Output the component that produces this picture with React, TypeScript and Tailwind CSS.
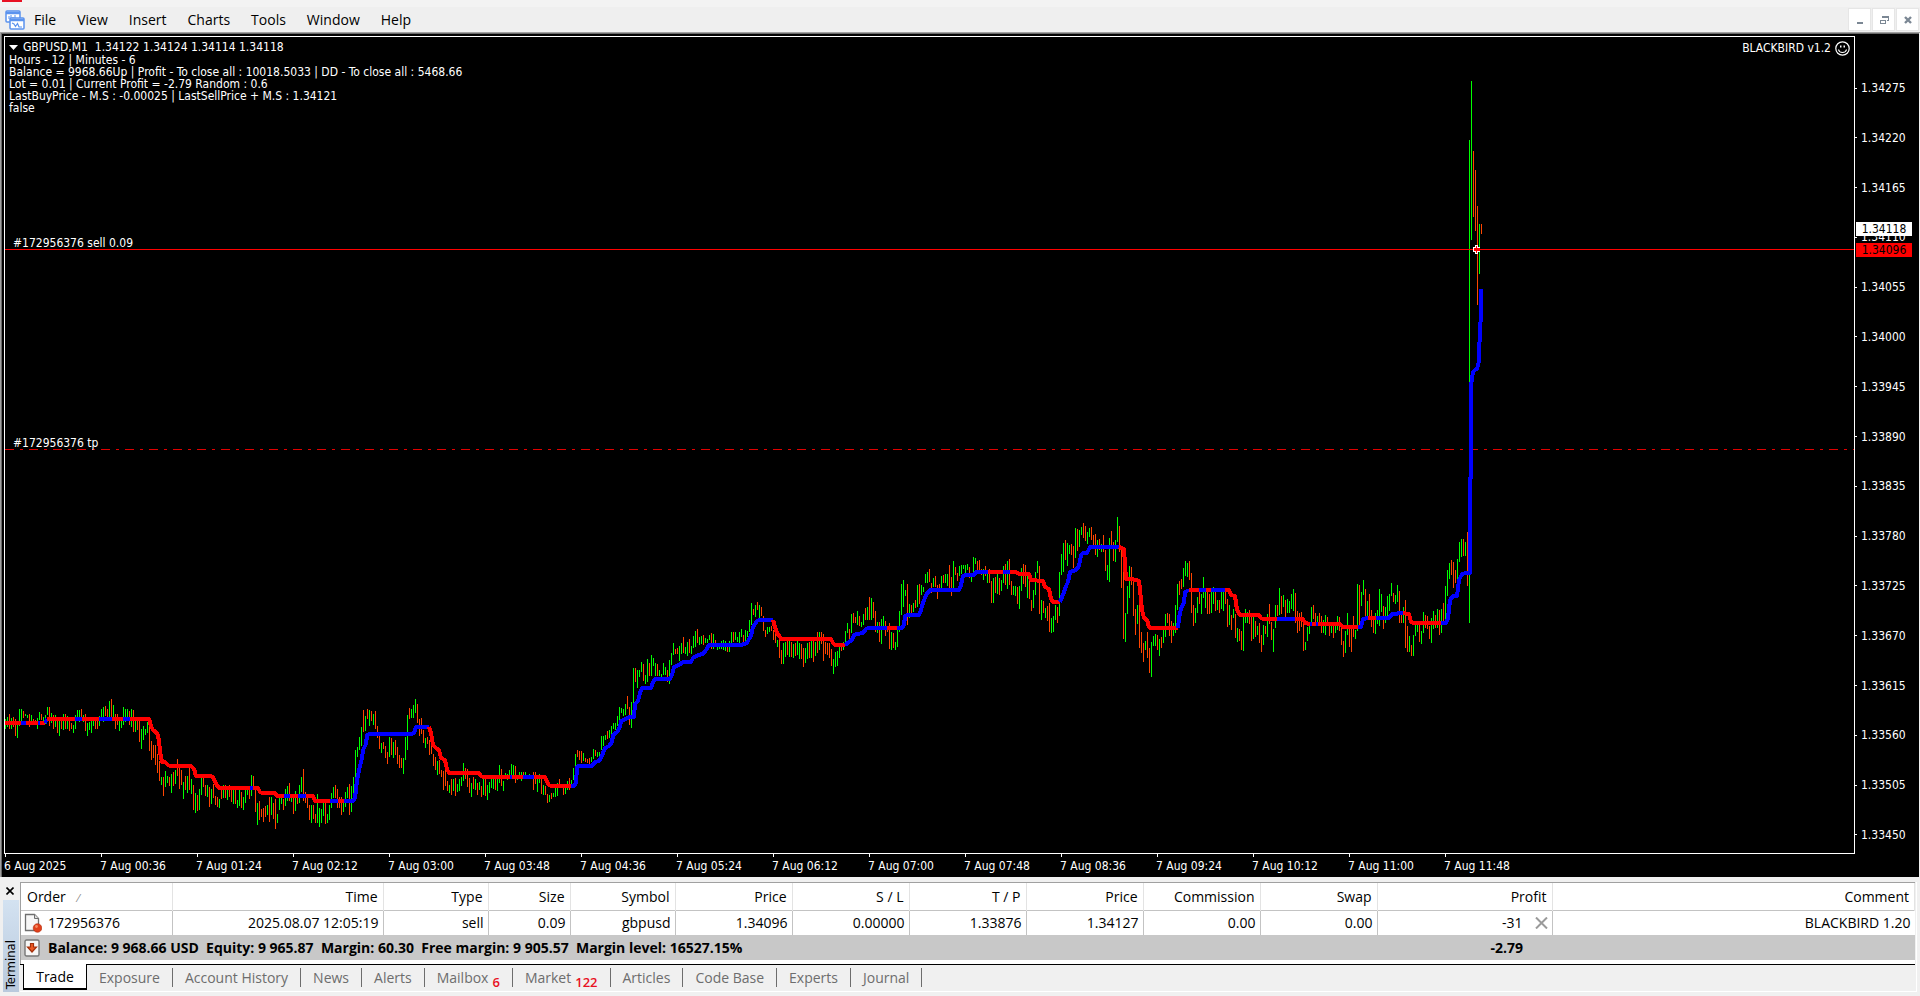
import React from "react";

/* Price bars, two pixels apart. Each entry is a direction (g = up, r = down)
   and the high and low, in thirds of a pixel below the run's origin. */
const RUNS: { x: number; y: number; bars: string }[] = [
  {
    x: 5,
    y: 690,
    bars:
      "g87-117 g81-111 r72-117 g84-117 r81-111 r87-138 g100-144 g57-108 g57-96 r63-84 g72-78 g75-84 r72-111 g75-105 r87-102 r90-105 g84-117 g66-90 r72-90 g81-102 g75-102 g51-75 r51-108 g69-99 r75-117 g75-111 r87-129 g87-138 r87-117 g72-120 r72-117 g78-117 r87-123 r99-117 g105-129 g75-117 g60-93 g60-96 r57-90 g75-96 r72-123 g99-138 g96-120 g93-129 g90-108 r84-117 r84-117 g78-108 g57-84 g51-96 r48-78 r57-84 g33-84 r27-84 g45-90 r72-117 r72-105 g84-123 g84-114 g51-105 g57-96 g57-90 r63-105 g57-111 r60-126 g90-126 r87-120 r90-156 g117-177 g108-150 g117-135 g96-129 r93-183 r153-210 r165-204 r165-225 r192-249 r213-273 g261-285 r261-318 g243-291 g258-279 r261-288 g252-309 r246-288 g240-282 r207-258 r234-297 r240-285 g276-327 r258-300 g258-309 r231-300 g267-312 r285-360 g309-369 r315-363 g297-360 g264-315 r261-291 r285-318 g285-321 r291-351 g297-342 r282-324 r318-345 r321-351 g327-354 r291-327 g285-324 r285-324 g291-330 r285-321 r291-336 g300-342 r291-342 g330-354 g297-348 r306-354 g321-360 g300-339 g294-315 r291-327 g255-318 r258-297 r297-366 g339-405 r333-390 r357-381 r354-396 r348-381 g345-375 r321-396 g321-375 r339-387 r327-417 g372-399 g324-360 g321-342 r327-360 g297-348 g288-333 r279-333 g318-336 r318-372 g303-363 r318-342 g285-339",
  },
  {
    x: 301,
    y: 690,
    bars:
      "g261-306 r237-333 r306-339 r318-354 r345-390 g345-398 r345-387 r372-400 g312-398 g354-410 g357-400 g339-378 r339-403 g372-398 g345-390 g309-354 g291-324 r285-324 r297-354 r321-354 r321-375 g333-366 g306-351 g291-324 r282-375 g288-366 g261-315 g180-261 g171-201 g141-180 g111-168 r60-126 g78-123 r57-87 g60-108 r63-93 g72-105 r63-117 r108-144 r135-177 g159-189 r156-177 r168-204 r186-222 g141-201 r144-195 g156-204 r150-195 r171-222 r195-234 r204-234 g204-252 g141-210 g75-180 r54-87 g57-84 g45-84 g27-69 r42-99 r87-138 r84-132 r120-159 g144-174 r141-162 r150-195 r165-192 r192-228 r201-240 g213-255 r210-252 r240-261 r243-300 r237-288 r273-303 g285-309 r267-315 g267-303 r264-318 g282-306 g267-303 g261-288 g219-273 r234-267 r237-291 r264-309 g279-321 r261-297 g267-300 r279-315 g276-300 r288-321 g261-315 r264-318 g285-330 g276-309 g264-294 g261-297 r264-300 g261-303 g225-279 r237-288 g273-303 g249-264 g252-270 g240-261 g222-255 g225-255 r228-279 g258-270 g246-261 g246-273 r246-258 g246-261 r255-261 g252-264 r255-264 r246-300 r246-282 g258-306 g252-279 r264-312 g285-315 r288-315 r312-339 g315-336 r309-327 g309-321 g291-321 g279-318 r267-291 g285-291 r282-315 g291-312 g273-300 r264-300 g270-282 g234-270 g192-258 r180-201 r183-210 r183-219 g189-213 r204-216 r207-219 r204-222",
  },
  {
    x: 591,
    y: 580,
    bars:
      "g531-546 g507-537 r510-528 g516-531 g516-531 g468-510 g468-498 g465-480 r453-477 g450-474 g438-462 g429-447 g429-450 g408-438 g381-420 g384-399 g387-408 g372-405 r348-387 r381-435 g366-444 g264-369 r264-306 g270-324 g270-291 g246-276 r252-303 g285-312 g237-306 r249-288 g225-288 g234-258 g249-288 r252-288 g270-288 g282-291 g249-285 g261-285 r270-306 g240-312 g219-255 g189-225 r207-222 r204-222 g198-243 g189-222 r171-219 g201-222 g186-228 r177-219 g198-222 g168-204 g153-201 r147-189 g171-195 g168-192 r165-195 g174-189 g177-189 g165-180 r159-207 g162-207 r180-195 g195-210 g192-207 g183-207 g180-210 g183-213 r198-216 g183-216 g156-189 r156-186 g156-180 g171-186 g156-189 g147-171 r165-186 g150-186 g153-171 g120-156 g69-135 r87-105 g75-111 r66-90 g75-114 r81-108 r108-153 r150-171 g141-162 g141-156 r138-153 r150-180 r159-189 g180-201 r180-234 r210-252 g189-252 g186-231 r177-225 g183-231 r186-231 g192-234 r189-228 g183-225 g189-237 r192-237 r204-261 g204-249 g189-237 r186-234 g183-234 r180-246 g186-228 r156-219 g156-210 r156-192 r162-243 r186-222 r189-225 r189-234 r207-258 g237-282 g216-261 g213-258 g201-234 r195-213 g186-210 g153-189 g129-159 r147-189 g102-159 r99-129 r111-129 g93-135 r108-138 g126-141 g102-135 r84-120 g81-120 r51-120 g54-120 r66-114 r93-156 g126-159 r126-186 g117-192 g108-141 r123-168 r141-156 r129-207 g156-210 r159-204 g186-210 g150-201",
  },
  {
    x: 899,
    y: 540,
    bars:
      "g213-276 g132-225 g120-201 g150-168 r132-255 g192-234 r195-219 g189-216 r180-204 g135-201 r132-192 g135-165 g141-156 g102-129 g96-129 r87-126 r129-159 g114-141 r108-141 r135-177 r132-144 g108-147 r105-129 g102-129 g102-138 r75-144 r111-168 g63-144 r81-105 r99-123 g78-108 g75-102 g75-87 g75-99 g72-90 r81-114 g102-126 g51-102 g54-72 r63-99 r60-90 r87-105 g87-120 r78-108 g93-129 r87-129 r123-189 g114-189 r111-159 g102-162 r114-165 g120-153 g78-129 r72-135 g63-147 r57-135 r123-165 g138-165 g138-168 r141-192 g138-207 g84-153 r72-132 r75-141 g102-174 r117-177 r180-213 g150-204 g96-165 g63-99 r78-222 g180-240 r183-219 g204-234 r198-243 r189-276 g234-279 g228-276 g195-240 r201-249 g96-228",
  },
  {
    x: 1061,
    y: 500,
    bars:
      "g162-225 g129-216 r120-180 g129-198 g135-162 r132-165 r138-204 g84-174 r87-153 g90-141 g81-105 r69-114 r78-123 g96-132 g84-111 r81-120 r105-141 r102-165 g120-171 r117-150 g132-156 r105-156 r150-213 g195-240 g114-246 r93-141 r126-183 g120-186 g51-126 r78-156 r144-264 r168-417 g339-426 g258-342 g198-294 r201-255 r246-348 r327-405 g315-372 r270-444 r396-459 r429-486 g423-450 r396-474 r444-519 g426-531 g408-438 g402-438 r405-450 g417-468 r411-444 g384-429 g342-411 r339-369 r342-408 r363-429 g369-408 g315-399 g252-330 r243-285 r237-267 g204-261 g183-228 g189-231 r183-240 r219-339 r315-378 g324-369 g291-339 r273-312 g282-342 g231-294 g270-324 r270-342 r282-342 g270-339 g261-312 r267-333 g300-330 r300-339 g270-327 g270-333 r273-312 r297-381 g315-375 r345-390 g327-354 r342-414 g384-426 r387-423 r393-450 g345-453 g327-369 g336-369 r330-372 r348-423 g345-417 r363-411 g378-405 r369-429 r405-456 g375-435 r378-402 g342-411 r312-372 r366-420 g387-456 g315-384 r315-348 g264-345 r288-342 g285-321 r300-351 g297-339 g303-339 g282-327 g267-333 r279-369 r333-399 r339-393 r336-381 r369-453 g426-450 g381-423 g375-402 g321-372 r315-357 r339-372 g348-372 r339-372 r348-399 g360-399 g345-405 r351-372 r372-408 g372-399 r375-414 g372-399 g348-390 r351-393 r375-435 r423-471 g393-459 g339-405 r381-441 r381-456 r348-411 g390-417 g252-393 r255-378 g276-318 g240-285 r267-348 g303-348 r282-354 r330-381 r354-399 g339-402 g330-372 g267-378 g282-336 r318-387 g321-369 g288-351 g282-333 g249-288 r279-306 g285-312 g255-306 r273-369 r342-369 g321-369 r300-444 r378-456 g408-456 r435-468 g405-468 g375-408 g369-396 r369-426 g393-432 g336-399 r345-384 r348-387 r378-417 g354-429 g333-387 r345-384 g327-384 r330-405 g327-399 r309-363 g258-360 g210-288 g189-237 r180-225 r186-264 r210-249 g177-240 g126-186 g117-171 r117-168 g126-168 r96-258",
  },
  {
    x: 1469,
    y: 0,
    bars: "g420-1869 g243-720 r453-651 r510-693 r618-915 g672-822 r672-702",
  },
];

/* Trend line: a colour letter, then the points of that stretch. */
const TREND = [
  "r 5,723 21,723",
  "b 21,723 26,723",
  "r 26,723 38,723",
  "b 38,723 40,723",
  "r 40,723 45,723",
  "b 45,723 47,719",
  "r 47,719 75,719",
  "b 75,719 82,719",
  "r 82,719 99,719",
  "b 99,719 112,719",
  "r 112,719 123,719",
  "b 123,719 130,719",
  "r 130,719 149,719 151,726 153,730 157,733 159,740 160,752 162,762 165,762 168,765 170,766 191,766 194,769 196,776 210,776 213,777 216,784 219,788 250,788",
  "b 250,788 253,788",
  "r 253,788 258,788 260,792 262,793 275,793 277,796 284,796",
  "b 284,796 290,796",
  "r 290,796 298,796",
  "b 298,796 306,796",
  "r 306,796 313,796 315,801 330,801",
  "b 330,801 338,801",
  "r 338,801 344,801",
  "b 344,801 353,801 355,798 357,780 360,766 362,758 363,750 366,744 367,735 369,734 412,734 414,733 416,727 429,727",
  "r 429,727 431,733 433,745 436,748 439,750 441,758 445,760 447,769 449,773 479,773 481,776 483,777 510,777",
  "b 510,777 512,777",
  "r 512,777 523,777",
  "b 523,777 534,777",
  "r 534,777 545,777 547,782 549,785 551,786 571,786",
  "b 571,786 574,786 576,783 577,767 578,766 592,766 595,762 599,761 601,758 605,748 609,746 612,742 613,735 617,732 620,727 621,721 626,719 629,717 634,717 635,704 638,701 640,693 642,688 651,688 653,682 655,679 670,679 672,675 674,667 679,665 683,662 691,662 693,658 698,655 703,654 706,650 709,645 741,645 747,643 749,639 751,636 753,627 757,621 759,620 773,620",
  "r 773,620 775,627 777,633 780,637 781,639 831,639 833,643 835,645 845,645",
  "b 845,645 849,642 852,640 854,635 857,634 863,633 866,629 868,628 887,628",
  "r 887,628 897,628",
  "b 897,628 902,628 904,625 905,616 908,615 919,615 921,610 923,603 926,595 930,590 959,590 961,585 963,576 966,575 974,575 976,572 988,572",
  "r 988,572 1003,572",
  "b 1003,572 1010,572",
  "r 1010,572 1016,572 1019,574 1029,574 1031,580 1043,581 1045,587 1049,589 1051,599 1053,602 1060,602",
  "b 1060,602 1062,597 1064,592 1066,586 1068,582 1070,572 1076,570 1079,566 1081,555 1083,553 1087,553 1090,547 1119,547",
  "r 1119,547 1122,548 1124,549 1125,564 1126,579 1132,579 1139,581 1140,590 1142,610 1144,618 1147,620 1149,627 1150,628 1178,628",
  "b 1178,628 1179,618 1180,613 1182,606 1184,603 1185,592 1189,590",
  "r 1189,590 1199,590",
  "b 1199,590 1206,590",
  "r 1206,590 1211,590",
  "b 1211,590 1225,590",
  "r 1225,590 1229,590 1231,595 1235,596 1237,610 1240,615 1259,615 1261,618 1263,619 1277,619",
  "b 1277,619 1295,619",
  "r 1295,619 1303,619 1305,623 1310,624",
  "b 1310,624 1312,624",
  "r 1312,624 1316,624",
  "b 1316,624 1318,624",
  "r 1318,624 1340,624 1343,627 1358,627",
  "b 1358,627 1361,627 1363,619 1368,618",
  "r 1368,618 1376,618",
  "b 1376,618 1389,618 1392,614 1403,613",
  "r 1403,613 1409,614 1411,622 1413,623 1441,623",
  "b 1441,623 1446,623 1448,618 1450,600 1453,596 1457,596 1459,580 1462,574 1466,573 1470,573 1470,478 1471,478 1471,385 1473,372 1475,370 1477,369 1479,361 1480,324 1481,320 1481,289",
];

function barPath(kind: string): string {
  return RUNS.map((run) =>
    run.bars
      .split(" ")
      .map((bar, i) => {
        if (bar[0] !== kind) return "";
        const [high, low] = bar.slice(1).split("-").map(Number);
        const top = Math.round(run.y + high / 3);
        const bottom = Math.round(run.y + low / 3);
        return `M${run.x + i * 2} ${top}h1V${bottom}h-1z`;
      })
      .join(""),
  ).join("");
}

const UP_BARS = barPath("g");
const DOWN_BARS = barPath("r");

const PRICES = [
  "1.34275", "1.34220", "1.34165", "1.34110", "1.34055", "1.34000", "1.33945", "1.33890",
  "1.33835", "1.33780", "1.33725", "1.33670", "1.33615", "1.33560", "1.33505", "1.33450",
];

const TIMES = [
  "6 Aug 2025", "7 Aug 00:36", "7 Aug 01:24", "7 Aug 02:12", "7 Aug 03:00", "7 Aug 03:48",
  "7 Aug 04:36", "7 Aug 05:24", "7 Aug 06:12", "7 Aug 07:00", "7 Aug 07:48", "7 Aug 08:36",
  "7 Aug 09:24", "7 Aug 10:12", "7 Aug 11:00", "7 Aug 11:48",
];

const MENUS = ["File", "View", "Insert", "Charts", "Tools", "Window", "Help"];

const COLUMNS = [
  { name: "Order", width: "w-[151px]", value: "172956376" },
  { name: "Time", width: "w-[211px]", value: "2025.08.07 12:05:19" },
  { name: "Type", width: "w-[105px]", value: "sell" },
  { name: "Size", width: "w-[82px]", value: "0.09" },
  { name: "Symbol", width: "w-[105px]", value: "gbpusd" },
  { name: "Price", width: "w-[117px]", value: "1.34096" },
  { name: "S / L", width: "w-[117px]", value: "0.00000" },
  { name: "T / P", width: "w-[117px]", value: "1.33876" },
  { name: "Price", width: "w-[117px]", value: "1.34127" },
  { name: "Commission", width: "w-[117px]", value: "0.00" },
  { name: "Swap", width: "w-[117px]", value: "0.00" },
  { name: "Profit", width: "w-[175px]", value: "-31" },
  { name: "Comment", width: "", value: "BLACKBIRD 1.20" },
];

const TABS: { name: string; count?: string }[] = [
  { name: "Exposure" },
  { name: "Account History" },
  { name: "News" },
  { name: "Alerts" },
  { name: "Mailbox", count: "6" },
  { name: "Market", count: "122" },
  { name: "Articles" },
  { name: "Code Base" },
  { name: "Experts" },
  { name: "Journal" },
];

function AppIcon() {
  return (
    <svg className="h-5 w-5" viewBox="0 0 20 20" fill="none" aria-hidden="true">
      <rect x="1" y="1" width="14" height="11" rx="1" fill="#fff" stroke="#5b93ee" strokeWidth="1.5" />
      <path d="M1 3h14" stroke="#5b93ee" strokeWidth="2.5" />
      <path d="M4 6v3M6 5v5M8 7v2M10 5v3" stroke="#5b93ee" />
      <rect x="5" y="8" width="14" height="11" rx="1" fill="#fff" stroke="#5b93ee" strokeWidth="1.5" />
      <path d="M5 10h14" stroke="#5b93ee" strokeWidth="2.5" />
      <path d="M7 13l2 1 1.500 2.500 2-3 1.500 3.500h3" stroke="#5b93ee" strokeWidth="1.2" />
    </svg>
  );
}

function MenuBar() {
  const button = "flex h-[21px] w-[21px] items-center justify-center bg-white outline outline-[#e6e6e6]";
  return (
    <header className="bg-[#efefef]">
      <div className="flex h-[7px] items-start bg-[#f3f3f3] pl-[2px]">
        <span className="h-[2px] w-5 bg-[#e81123]" />
      </div>
      <div className="flex h-[25px] items-center pr-[2px] pl-[5px]">
        <AppIcon />
        <nav className="flex flex-1 gap-[21px] pl-[9px] text-[14px] leading-5 text-black">
          {MENUS.map((name) => (
            <button key={name} type="button">
              {name}
            </button>
          ))}
        </nav>
        <div className="flex gap-[3px]">
          <button type="button" aria-label="Minimize" className={button}>
            <svg className="h-3 w-3" viewBox="0 0 12 12" aria-hidden="true">
              <path d="M3 8h6v2H3z" fill="#7b8794" />
            </svg>
          </button>
          <button type="button" aria-label="Restore" className={button}>
            <svg className="h-3 w-3" viewBox="0 0 12 12" fill="none" stroke="#7b8794" shapeRendering="crispEdges" aria-hidden="true">
              <path d="M4.500 4V2.500h6v4H9M4 3h7" />
              <path d="M2.500 6.500h5v3h-5zM2 6h6" />
            </svg>
          </button>
          <button type="button" aria-label="Close" className={button}>
            <svg className="h-3 w-3" viewBox="0 0 12 12" aria-hidden="true">
              <path d="M3 3l6 6M9 3l-6 6" stroke="#7b8794" strokeWidth="2.4" />
            </svg>
          </button>
        </div>
      </div>
    </header>
  );
}

function PlotDrawing() {
  return (
    <svg
      className="absolute inset-0 h-full w-full"
      viewBox="5 37 1849 816"
      preserveAspectRatio="none"
      shapeRendering="crispEdges"
      role="img"
      aria-label="GBPUSD one minute price bars with trend line"
    >
      <path d="M5 449.500H1854" stroke="#e00000" strokeDasharray="9 6 3 6" />
      <path d={UP_BARS} fill="#00ff00" />
      <path d={DOWN_BARS} fill="#ff4500" />
      {TREND.map((part) => (
        <polyline
          key={part}
          points={part.slice(2)}
          fill="none"
          stroke={part[0] === "r" ? "#ff0000" : "#0000ff"}
          strokeWidth="4"
          strokeLinejoin="round"
        />
      ))}
      <path d="M5 249.500H1854" stroke="#ff0000" />
      <path d="M1475 245h3v2h2v5h-2v2h-3v-2h-2v-5h2z" fill="#fff" />
      <path d="M1476 246h1v2h3v3h-3v2h-1v-2h-2v-3h2z" fill="#ff0000" />
    </svg>
  );
}

function Chart() {
  return (
    <main className="flex flex-1 flex-col border-t border-l border-[#a0a0a0] pr-px">
      <div className="flex flex-1 flex-col border-t border-l border-[#696969] bg-black pt-[2px] pl-[2px] font-['DejaVu_Sans_Condensed','DejaVu_Sans',sans-serif] text-[12px] text-white">
        <div className="flex flex-1">
          <section className="relative flex flex-1 justify-between border border-white">
            <PlotDrawing />
            <div className="relative pl-1 leading-3">
              <p className="flex items-center gap-[5px] pt-[3px] leading-[14px]">
                <svg className="h-[5px] w-[9px]" viewBox="0 0 9 5" aria-hidden="true">
                  <path d="M0 0h9L4.500 5z" fill="#fff" />
                </svg>
                <span className="whitespace-pre">GBPUSD,M1  1.34122 1.34124 1.34114 1.34118</span>
              </p>
              <p>Hours - 12 | Minutes - 6</p>
              <p>Balance = 9968.66Up | Profit - To close all : 10018.5033 | DD - To close all : 5468.66</p>
              <p>Lot = 0.01 | Current Profit = -2.79 Random : 0.6</p>
              <p>LastBuyPrice - M.S : -0.00025 | LastSellPrice + M.S : 1.34121</p>
              <p>false</p>
            </div>
            <p className="relative flex h-[22px] items-center gap-1 pr-1">
              BLACKBIRD v1.2
              <svg className="h-[15px] w-[15px]" viewBox="0 0 15 15" fill="none" stroke="#fff" aria-hidden="true">
                <circle cx="7.5" cy="7.5" r="6.7" strokeWidth="1.2" />
                <path d="M3.500 8.500c.8 4 7.200 4 8 0" strokeWidth="1.2" />
                <path d="M5 4.500h1.500v2H5zM8.500 4.500H10v2H8.500z" fill="#fff" stroke="none" />
              </svg>
            </p>
            <span className="absolute top-[25.2%] left-2 -translate-y-1/2">#172956376 sell 0.09</span>
            <span className="absolute top-[49.7%] left-2 -translate-y-1/2">#172956376 tp</span>
          </section>
          <ol className="relative flex w-16 flex-col justify-between pt-[44px] pb-[11px] leading-4">
            {PRICES.map((price) => (
              <li key={price} className="flex items-center gap-1">
                <span className="h-px w-[2px] bg-white" />
                {price}
              </li>
            ))}
            <li className="absolute top-[186px] left-px h-[14px] w-14 bg-white text-center leading-[14px] text-black">1.34118</li>
            <li className="absolute top-[207px] left-px h-[14px] w-14 bg-[#ff0000] text-center leading-[14px] text-black">1.34096</li>
          </ol>
        </div>
        <ol className="flex h-[23px] overflow-hidden">
          {TIMES.map((time) => (
            <li key={time} className="w-24 shrink-0">
              <span className="ml-px block h-[3px] w-px bg-white" />
              <span className="block leading-[18px]">{time}</span>
            </li>
          ))}
        </ol>
      </div>
    </main>
  );
}

function SellIcon() {
  return (
    <svg className="h-5 w-[18px] shrink-0" viewBox="0 0 18 20" aria-hidden="true">
      <path d="M1.500 1.500h9l4 4v12h-13z" fill="#f7f7f7" stroke="#6f6f6f" strokeWidth="1.300" />
      <path d="M10.500 1.500v4h4" fill="#ddd" stroke="#6f6f6f" />
      <circle cx="13.500" cy="15" r="4.300" fill="#e0401b" stroke="#b02a0c" strokeWidth=".6" />
      <circle cx="12.500" cy="13.500" r="1.400" fill="#f58a63" />
    </svg>
  );
}

function BalanceIcon() {
  return (
    <svg className="h-[18px] w-[18px] shrink-0" viewBox="0 0 18 18" aria-hidden="true">
      <rect x="1" y="1" width="14" height="16" rx="1.500" fill="#f6f6f6" stroke="#777" strokeWidth="1.400" />
      <path d="M6.500 4.500h3V8h3L8 13 3.500 8h3z" fill="#ee5a24" stroke="#a3300c" strokeWidth="1.200" />
    </svg>
  );
}

function Terminal() {
  return (
    <section className="flex h-[119px] bg-[#f0f0f0] pt-[5px] pr-[3px] pb-1">
      <div className="flex w-5 flex-col items-center">
        <button type="button" aria-label="Close terminal" className="flex h-[18px] w-4 shrink-0 items-center justify-center">
          <svg className="h-2 w-2" viewBox="0 0 8 8" aria-hidden="true">
            <path d="M.5.5l7 7M7.500.5l-7 7" stroke="#000" strokeWidth="1.600" />
          </svg>
        </button>
        <div className="ml-[2px] flex min-h-0 w-4 flex-1 items-end bg-gradient-to-b from-[#d3e2f1] to-[#b9c9dd] pb-[3px]">
          <span className="w-4 rotate-180 font-['DejaVu_Sans_Condensed','DejaVu_Sans',sans-serif] text-[13px] leading-4 whitespace-nowrap text-black [writing-mode:vertical-rl]">
            Terminal
          </span>
        </div>
      </div>
      <div className="flex flex-1 flex-col border-r border-b border-white">
        <div className="mr-px border-t border-l border-[#a0a0a0] bg-white pb-1 text-[14px] text-black">
          <table className="w-full table-fixed border-collapse">
            <thead>
              <tr className="h-[27px] border-b border-[#c3c3c3]">
                {COLUMNS.map(({ name, width }, i) => (
                  <th
                    key={i}
                    scope="col"
                    className={`${width} border-r border-[#e3e3e3] p-0 font-normal ${i === 0 ? "pl-[6px] text-left" : "pr-[5px] text-right"}`}
                  >
                    {name}
                    {i === 0 && <span className="pl-3 text-[11px] text-[#808080]">⁄</span>}
                  </th>
                ))}
              </tr>
            </thead>
            <tbody>
              <tr className="h-[25px]">
                {COLUMNS.map(({ name, value }, i) => (
                  <td
                    key={i}
                    className={`p-0 leading-5 ${i === 0 ? "pl-[3px]" : "pr-1"} ${i === COLUMNS.length - 1 ? "" : "border-r border-[#c3c3c3]"}`}
                  >
                    {i === 0 ? (
                      <span className="flex items-center gap-[6px]">
                        <SellIcon />
                        {value}
                      </span>
                    ) : (
                      <span className="flex items-center justify-end gap-3">
                        {value}
                        {name === "Profit" && (
                          <button type="button" aria-label="Close order">
                            <svg className="h-3 w-[13px]" viewBox="0 0 13 12" aria-hidden="true">
                              <path d="M1 .5l11 11M12 .5l-11 11" stroke="#9a9a9a" strokeWidth="2" />
                            </svg>
                          </button>
                        )}
                      </span>
                    )}
                  </td>
                ))}
              </tr>
              <tr className="h-[25px] bg-[#c8c8c8] font-bold">
                <td colSpan={11} className="p-0 pl-[3px] leading-5">
                  <span className="flex items-center gap-[6px]">
                    <BalanceIcon />
                    <span className="whitespace-pre">
                      Balance: 9 968.66 USD  Equity: 9 965.87  Margin: 60.30  Free margin: 9 905.57  Margin level: 16527.15%
                    </span>
                  </span>
                </td>
                <td className="p-0 pr-[29px] text-right leading-5">-2.79</td>
                <td />
              </tr>
            </tbody>
          </table>
        </div>
        <div className="mr-px flex flex-1 items-start border-t border-black pl-[3px] text-[14px] text-[#6d6d6d]">
          <button type="button" className="-mt-px h-[26px] w-[64px] border-x border-b-2 border-black bg-white pt-px leading-6 text-black">
            Trade
          </button>
          {TABS.map(({ name, count }) => (
            <button key={name} type="button" className="mt-[3px] flex h-[19px] items-center border-r border-[#6d6d6d] px-3 leading-[18px]">
              {name}
              {count && <span className="pt-2 pl-1 text-[13px] leading-3 font-semibold text-[#e81123]">{count}</span>}
            </button>
          ))}
        </div>
      </div>
    </section>
  );
}

export default function App() {
  return (
    <div className="flex min-h-screen flex-col bg-[#f0f0f0] font-['Open_Sans','Noto_Sans',sans-serif]">
      <MenuBar />
      <Chart />
      <Terminal />
    </div>
  );
}
